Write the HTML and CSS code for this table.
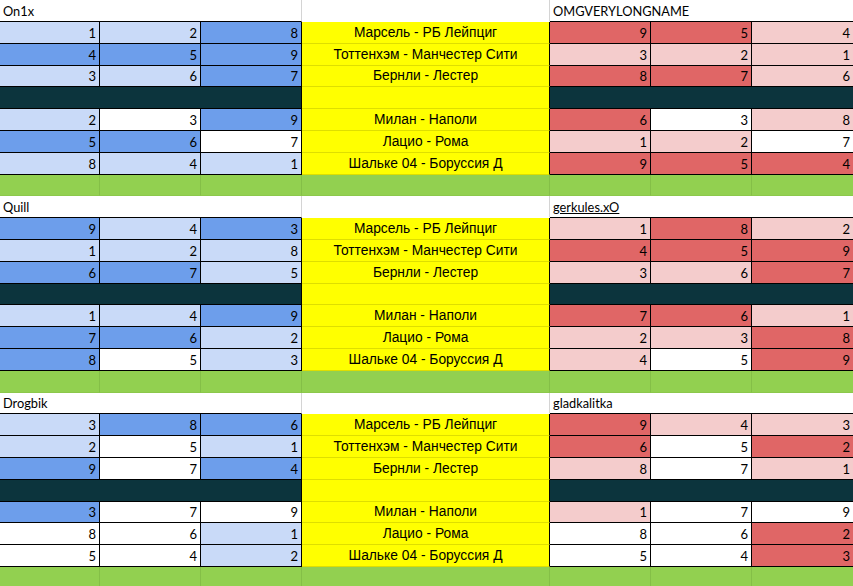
FILE: index.html
```html
<!DOCTYPE html>
<html lang="ru">
<head>
<meta charset="utf-8">
<title>Sheet</title>
<link rel="stylesheet" href="styles.css">
</head>
<body>
<div class="sheet">
  <!-- Section 1 -->
  <div class="name nl">On1x</div><div class="name nd"></div><div class="name nr">OMGVERYLONGNAME</div>
  <div class="n l">1</div><div class="n l">2</div><div class="n d">8</div><div class="m">Марсель - РБ Лейпциг</div><div class="n r">9</div><div class="n r">5</div><div class="n p">4</div>
  <div class="n d">4</div><div class="n d">5</div><div class="n d">9</div><div class="m">Тоттенхэм - Манчестер Сити</div><div class="n p">3</div><div class="n p">2</div><div class="n p">1</div>
  <div class="n l">3</div><div class="n l">6</div><div class="n d">7</div><div class="m">Бернли - Лестер</div><div class="n r">8</div><div class="n r">7</div><div class="n p">6</div>
  <div class="dk"></div><div class="m"></div><div class="dk"></div>
  <div class="n l">2</div><div class="n w">3</div><div class="n d">9</div><div class="m">Милан - Наполи</div><div class="n r">6</div><div class="n w">3</div><div class="n p">8</div>
  <div class="n d">5</div><div class="n d">6</div><div class="n w">7</div><div class="m">Лацио - Рома</div><div class="n p">1</div><div class="n p">2</div><div class="n w">7</div>
  <div class="n l">8</div><div class="n l">4</div><div class="n l">1</div><div class="m">Шальке 04 - Боруссия Д</div><div class="n r">9</div><div class="n r">5</div><div class="n r">4</div>
  <div class="g"></div><div class="g"></div><div class="g"></div><div class="g"></div><div class="g"></div><div class="g"></div><div class="g"></div>

  <!-- Section 2 -->
  <div class="name nl">Quill</div><div class="name nd"></div><div class="name nr"><span class="link">gerkules.xO</span></div>
  <div class="n d">9</div><div class="n l">4</div><div class="n d">3</div><div class="m">Марсель - РБ Лейпциг</div><div class="n p">1</div><div class="n r">8</div><div class="n p">2</div>
  <div class="n l">1</div><div class="n l">2</div><div class="n l">8</div><div class="m">Тоттенхэм - Манчестер Сити</div><div class="n r">4</div><div class="n r">5</div><div class="n r">9</div>
  <div class="n d">6</div><div class="n d">7</div><div class="n l">5</div><div class="m">Бернли - Лестер</div><div class="n p">3</div><div class="n p">6</div><div class="n r">7</div>
  <div class="dk"></div><div class="m"></div><div class="dk"></div>
  <div class="n l">1</div><div class="n l">4</div><div class="n d">9</div><div class="m">Милан - Наполи</div><div class="n r">7</div><div class="n r">6</div><div class="n p">1</div>
  <div class="n d">7</div><div class="n d">6</div><div class="n l">2</div><div class="m">Лацио - Рома</div><div class="n p">2</div><div class="n p">3</div><div class="n r">8</div>
  <div class="n d">8</div><div class="n w">5</div><div class="n l">3</div><div class="m">Шальке 04 - Боруссия Д</div><div class="n p">4</div><div class="n w">5</div><div class="n r">9</div>
  <div class="g"></div><div class="g"></div><div class="g"></div><div class="g"></div><div class="g"></div><div class="g"></div><div class="g"></div>

  <!-- Section 3 -->
  <div class="name nl">Drogbik</div><div class="name nd"></div><div class="name nr">gladkalitka</div>
  <div class="n l">3</div><div class="n d">8</div><div class="n d">6</div><div class="m">Марсель - РБ Лейпциг</div><div class="n r">9</div><div class="n p">4</div><div class="n p">3</div>
  <div class="n l">2</div><div class="n w">5</div><div class="n l">1</div><div class="m">Тоттенхэм - Манчестер Сити</div><div class="n r">6</div><div class="n w">5</div><div class="n r">2</div>
  <div class="n d">9</div><div class="n w">7</div><div class="n d">4</div><div class="m">Бернли - Лестер</div><div class="n p">8</div><div class="n w">7</div><div class="n p">1</div>
  <div class="dk"></div><div class="m"></div><div class="dk"></div>
  <div class="n d">3</div><div class="n w">7</div><div class="n w">9</div><div class="m">Милан - Наполи</div><div class="n p">1</div><div class="n w">7</div><div class="n w">9</div>
  <div class="n w">8</div><div class="n w">6</div><div class="n l">1</div><div class="m">Лацио - Рома</div><div class="n w">8</div><div class="n w">6</div><div class="n r">2</div>
  <div class="n w">5</div><div class="n w">4</div><div class="n l">2</div><div class="m">Шальке 04 - Боруссия Д</div><div class="n w">5</div><div class="n w">4</div><div class="n r">3</div>
  <div class="g"></div><div class="g"></div><div class="g"></div><div class="g"></div><div class="g"></div><div class="g"></div><div class="g"></div>
</div>
</body>
</html>
```

FILE: styles.css
```css
html, body {
  margin: 0;
  padding: 0;
  background: #ffffff;
  overflow: hidden;
}

.sheet {
  display: grid;
  grid-template-columns: 100px 101px 101px 248px 101px 101px 102px;
  grid-template-rows: 22px repeat(26, 21.8px);
  width: 854px;
  font-family: Lato, "Open Sans", sans-serif;
  font-size: 13px;
  color: #000;
}

.sheet > div {
  box-sizing: border-box;
  display: flex;
  align-items: flex-end;
  line-height: 16px;
  padding-bottom: 2px;
  overflow: hidden;
  white-space: nowrap;
  border-bottom: 1px solid #000;
}

/* name rows */
.name {
  background: #fff;
  padding-left: 3px;
  font-size: 12.8px;
}
.nl {
  grid-column: span 3;
  border-right: 1px solid #d4d4d4;
}
.nd {
  border-bottom-color: #fff !important;
  border-right: 1px solid #d4d4d4;
}
.nr {
  grid-column: span 3;
}
.link {
  text-decoration: underline;
}

/* number cells */
.n {
  justify-content: flex-end;
  padding-right: 3px;
  border-right: 1px solid #000;
}
.l { background: #c9daf8; }
.d { background: #6d9eeb; }
.w { background: #ffffff; }
.p { background: #f4cccc; }
.r { background: #e06666; }

/* match column */
.m {
  background: #ffff00;
  justify-content: center;
  border-right: 1px solid #000;
  border-bottom-color: #dede00 !important;
  font-family: "Liberation Sans", Arial, sans-serif;
  font-size: 13.8px;
}

/* separator */
.dk {
  grid-column: span 3;
  background: #0c343d;
  border-right: 1px solid #000;
}

/* green row */
.g {
  background: #92d050;
  border-right: 1px solid #84bf47;
  border-bottom-color: #8cc84b !important;
}
```
